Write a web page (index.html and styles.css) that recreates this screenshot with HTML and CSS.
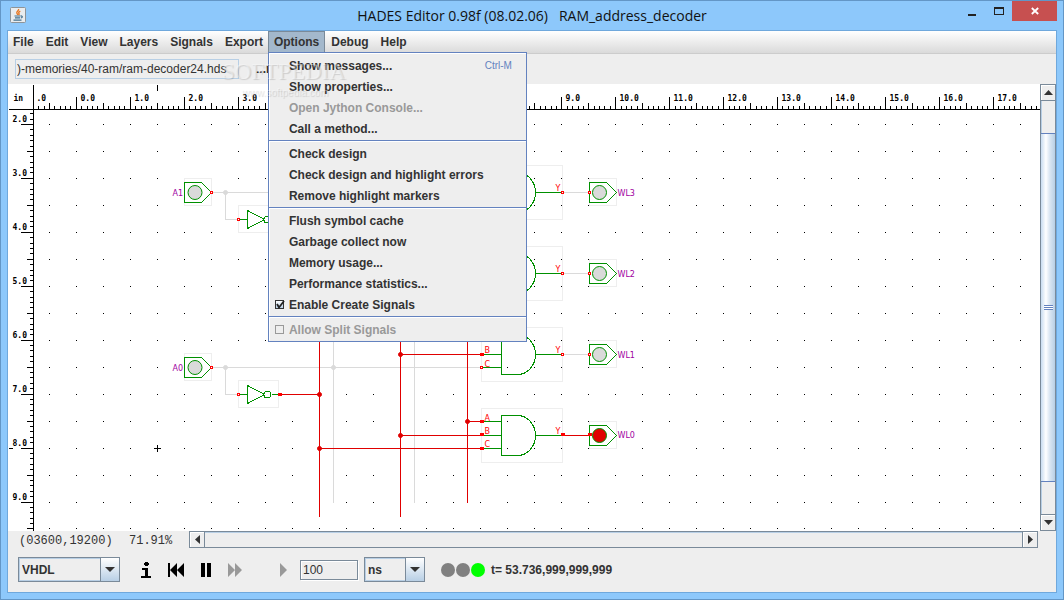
FILE: index.html
```html
<!DOCTYPE html>
<html lang="en">
<head>
<meta charset="utf-8">
<title>HADES Editor</title>
<link rel="stylesheet" href="styles.css">
</head>
<body>
<div class="window">
  <header class="titlebar">
    <svg class="app-icon" width="16" height="16" viewBox="0 0 16 16" aria-hidden="true">
      <rect x=".5" y=".5" width="15" height="15" rx="1" fill="#e9ecee" stroke="#8d9499"/>
      <path d="M8.500 2c1 1.600-2.600 2.400-1.600 4.200.3.700 1 1.200.8 1.900M10.300 4.200c-1.600.7-2 1.400-1.300 2.300.4.600.1 1-.3 1.400" fill="none" stroke="#e87722" stroke-width="1.400"/>
      <path d="M4.500 9h6M5 10.800h5M3.500 13.200h8M10.800 9c2-.3 2 1.800 0 2" fill="none" stroke="#41708f" stroke-width="1.200"/>
    </svg>
    <h1 class="title">HADES Editor 0.98f (08.02.06)&nbsp;&nbsp; RAM_address_decoder</h1>
    <div class="window-buttons">
      <button class="win-btn" aria-label="Minimize"><svg width="8" height="10"><path d="M0 8h8v2H0z" fill="#222"/></svg></button>
      <button class="win-btn" aria-label="Maximize"><svg width="10" height="10" shape-rendering="crispEdges"><path d="M0 1h10v8H0zM1 3v5h8V3z" fill="#222" fill-rule="evenodd"/></svg></button>
      <button class="win-btn close" aria-label="Close"><svg width="8" height="8"><path d="M.8 1l6.400 6M7.200 1L.8 7" stroke="#fff" stroke-width="1.800"/></svg></button>
    </div>
  </header>

  <main class="client">
    <nav class="menubar">
      <button class="menu">File</button>
      <button class="menu">Edit</button>
      <button class="menu">View</button>
      <button class="menu">Layers</button>
      <button class="menu">Signals</button>
      <button class="menu">Export</button>
      <div class="menu-holder">
        <button class="menu open" aria-expanded="true">Options</button>
        <div class="popup">
          <button class="item">Show messages...<span class="key">Ctrl-M</span></button>
          <button class="item">Show properties...</button>
          <button class="item" disabled>Open Jython Console...</button>
          <button class="item">Call a method...</button>
          <hr class="separator">
          <button class="item">Check design</button>
          <button class="item">Check design and highlight errors</button>
          <button class="item">Remove highlight markers</button>
          <hr class="separator">
          <button class="item">Flush symbol cache</button>
          <button class="item">Garbage collect now</button>
          <button class="item">Memory usage...</button>
          <button class="item">Performance statistics...</button>
          <label class="item check"><span class="tick"><input class="box" type="checkbox" checked><svg class="mark" width="10" height="10"><path d="M2 4l2 3.500L9 1" fill="none" stroke="#222" stroke-width="1.800"/></svg></span>Enable Create Signals</label>
          <hr class="separator">
          <label class="item check off"><span class="tick"><input class="box" type="checkbox" disabled></span>Allow Split Signals</label>
        </div>
      </div>
      <button class="menu">Debug</button>
      <button class="menu">Help</button>
    </nav>

    <div class="toolbar">
      <input class="path" type="text" aria-label="Design file" value=")-memories/40-ram/ram-decoder24.hds">
      <span class="message">...m</span>
      <div class="watermark" aria-hidden="true"><span class="brand">SOFTPEDIA</span><span class="site">www.softpedia.com</span></div>
    </div>

    <div class="workspace">
      <div class="canvas">
        <svg class="schematic" id="schematic" role="img" aria-label="Schematic">
          <defs>
            <g id="port"><rect class="bounds" x="0" y="-14" width="27" height="27"/><path class="part" d="M0-10H17L27 0 17 10H0z"/></g>
            <g id="inverter"><rect class="bounds" x="0" y="-14" width="40" height="27"/><path class="part" d="M0 0H9M9-9V9L26 0zM33 0H40"/><circle class="bubble" cx="29" cy="0" r="3.500"/></g>
            <g id="gate"><rect class="bounds" x="0" y="-27" width="81" height="54"/><path class="part" d="M20-20H36A18 20 0 0 1 36 20H20zM54 0H80M0-14H20M0 0H20M0 13H20"/></g>
            <rect id="pin" x="-1" y="-1" width="2" height="2" class="pin"/>
            <rect id="pin-on" x="-1" y="-1" width="3" height="2" class="pin on"/>
          </defs>
          <g transform="translate(-7.500 -83.500)">
            <g id="grid"></g>
            <path class="wire idle" d="M212 192H481M225 192V219H238M212 367H481M225 367V394H238M333 192V502M414 192V502M562 192H588M562 273H588M562 354H588"/>
            <path class="wire" d="M279 394H319M319 341V516M400 341V516M467 341V502M466 341H469M400 354H481M467 421H481M400 435H481M319 448H481M562 435H588"/>
            <use href="#port" x="184" y="192"/><use href="#port" x="184" y="367"/>
            <use href="#inverter" x="238" y="219"/><use href="#inverter" x="238" y="394"/>
            <use href="#gate" x="481" y="192"/><use href="#gate" x="481" y="273"/><use href="#gate" x="481" y="354"/><use href="#gate" x="481" y="435"/>
            <use href="#port" x="589" y="192"/><use href="#port" x="589" y="273"/><use href="#port" x="589" y="354"/><use href="#port" x="589" y="435"/>
            <circle class="lamp" cx="194.500" cy="192" r="7"/><circle class="lamp" cx="194.500" cy="367" r="7"/>
            <circle class="lamp" cx="599" cy="192" r="7"/><circle class="lamp" cx="599" cy="273" r="7"/><circle class="lamp" cx="599" cy="354" r="7"/><circle class="lamp lit" cx="599" cy="435" r="7"/>
            <circle class="joint idle" cx="225" cy="192" r="2"/><circle class="joint idle" cx="225" cy="367" r="2"/><circle class="joint idle" cx="333" cy="367" r="2"/>
            <circle class="joint" cx="319" cy="394" r="2"/><circle class="joint" cx="319" cy="448" r="2"/><circle class="joint" cx="400" cy="354" r="2"/><circle class="joint" cx="400" cy="435" r="2"/><circle class="joint" cx="467" cy="421" r="2"/>
            <use href="#pin" x="211" y="192"/><use href="#pin" x="211" y="367"/><use href="#pin" x="238" y="219"/><use href="#pin" x="238" y="394"/>
            <use href="#pin-on" x="279" y="394"/>
            <use href="#pin" x="562" y="192"/><use href="#pin" x="589" y="192"/><use href="#pin" x="562" y="273"/><use href="#pin" x="589" y="273"/><use href="#pin" x="562" y="354"/><use href="#pin" x="589" y="354"/>
            <use href="#pin-on" x="562" y="434"/><use href="#pin-on" x="589" y="434"/>
            <use href="#pin-on" x="481" y="354"/><use href="#pin" x="481" y="367"/>
            <use href="#pin-on" x="481" y="421"/><use href="#pin-on" x="481" y="434"/><use href="#pin-on" x="481" y="448"/>
            <g class="pin-name">
              <text x="555" y="190">Y</text><text x="555" y="271">Y</text><text x="555" y="352">Y</text><text x="555" y="433">Y</text>
              <text x="484" y="352">B</text><text x="484" y="366">C</text>
              <text x="484" y="420">A</text><text x="484" y="433">B</text><text x="484" y="446">C</text>
            </g>
            <g class="port-name">
              <text x="172" y="195">A1</text><text x="172" y="370">A0</text>
              <text x="617" y="195">WL3</text><text x="617" y="276">WL2</text><text x="617" y="357">WL1</text><text x="617" y="437">WL0</text>
            </g>
            <path class="ink" d="M153.500 448H160.500M157 444.500V451.500"/>
          </g>
        </svg>
      </div>
      <div class="scroll vertical">
        <button class="arrow" aria-label="Scroll up"><svg width="9" height="5"><path d="M0 5L4.500 0 9 5z" fill="#333"/></svg></button>
        <div class="track"><div class="thumb"><span class="grip"></span></div></div>
        <button class="arrow" aria-label="Scroll down"><svg width="9" height="5"><path d="M0 0L4.500 5 9 0z" fill="#333"/></svg></button>
      </div>
    </div>

    <div class="status">
      <span class="position">(03600,19200)</span>
      <span class="zoom">71.91%</span>
      <div class="scroll horizontal">
        <button class="arrow" aria-label="Scroll left"><svg width="5" height="9"><path d="M5 0L0 4.500 5 9z" fill="#333"/></svg></button>
        <div class="track"></div>
        <button class="arrow" aria-label="Scroll right"><svg width="5" height="9"><path d="M0 0L5 4.500 0 9z" fill="#333"/></svg></button>
      </div>
    </div>

    <div class="controls">
      <span class="combo language"><select class="choice" aria-label="Language"><option>VHDL</option></select><span class="drop"><svg width="10" height="5"><path d="M0 0H10L5 5z" fill="#333"/></svg></span></span>
      <div class="transport">
        <button class="tool" aria-label="Info"><svg width="10" height="16" shape-rendering="crispEdges"><path d="M4 0h3v1h1v2H7v1H4V3H3V1h1zM1 6h6v8h3v2H0v-2h4V8H1z"/></svg></button>
        <button class="tool" aria-label="Restart"><svg width="16" height="14"><path d="M0 0h2v14H0zM9 0v14L2 7zM16 0v14L9 7z"/></svg></button>
        <button class="tool" aria-label="Pause"><svg width="10" height="14"><path d="M0 0h4v14H0zM6 0h4v14H6z"/></svg></button>
        <button class="tool" aria-label="Fast forward" disabled><svg width="14" height="14"><path d="M0 0l7 7-7 7zM7 0l7 7-7 7z"/></svg></button>
        <button class="tool step" aria-label="Step" disabled><svg width="7" height="14"><path d="M0 0l7 7-7 7z"/></svg></button>
      </div>
      <input class="amount" type="text" aria-label="Step time" value="100">
      <span class="combo unit"><select class="choice" aria-label="Time unit"><option>ns</option></select><span class="drop"><svg width="10" height="5"><path d="M0 0H10L5 5z" fill="#333"/></svg></span></span>
      <span class="lights"><i class="light"></i><i class="light"></i><i class="light go"></i></span>
      <output class="time">t= 53.736,999,999,999</output>
    </div>
  </main>
</div>
<script src="grid.js"></script>
</body>
</html>
```

FILE: grid.js
```js
// Draws the two rulers and the snap dots over whatever area the canvas has.
(function () {
  var svg = document.getElementById('schematic');
  var grid = document.getElementById('grid');
  var left = 8, top = 84, axisX = 33, axisY = 109;
  var dot = 26.97, tick = dot / 5, dotX = 49.4, dotY = 124.43;

  function label(x, y, text) {
    return '<text class="scale" x="' + x + '" y="' + y + '">' + text + '</text>';
  }
  function draw() {
    var right = left + svg.clientWidth, bottom = top + svg.clientHeight;
    var path = 'M' + left + ' ' + axisY + 'H' + right + 'M' + axisX + ' ' + top + 'V' + bottom;
    var dots = '', out = '', k, i, x, y, size;
    path += 'M157 84V90M8 448H12';
    for (k = -2; (x = Math.floor(dotX + tick * k)) < right; k++) {
      size = k % 10 === 5 ? 13 : k % 5 === 0 ? 7 : 4;
      path += 'M' + x + ' ' + (axisY - size) + 'V' + axisY;
      if (size === 13) out += label(x + 4, 100, ((k - 5) / 10) + '.0');
    }
    for (k = -2; (y = Math.floor(dotY + tick * k)) < bottom; k++) {
      size = k % 10 === 0 ? 13 : k % 5 === 0 ? 7 : 4;
      path += 'M' + (axisX - size) + ' ' + y + 'H' + axisX;
      if (size === 13) out += label(12, y - 3, (k / 10 + 2) + '.0');
    }
    for (i = 0; (x = Math.floor(dotX + dot * i)) < right; i++) {
      for (k = 0; (y = Math.floor(dotY + dot * k)) < bottom; k++) {
        dots += 'M' + (x - 0.5) + ' ' + y + 'h1';
      }
    }
    grid.innerHTML = '<path class="ink" d="' + path + '"/><path class="ink" d="' + dots + '"/>' +
      label(13, 100, 'in') + label(36, 100, '.0') + out;
  }
  draw();
  window.addEventListener('resize', draw);
})();
```

FILE: styles.css
```css
* { box-sizing: border-box; }
body {
  margin: 0;
  font: bold 12px/14px "Liberation Sans", Arial, sans-serif;
  color: #333;
}
button, input, select { font: inherit; color: inherit; margin: 0; padding: 0; border: 0; border-radius: 0; }
button { background: none; }
svg { display: block; }

.window {
  display: flex;
  flex-direction: column;
  height: 100vh;
  padding: 0 6px 6px;
  background: #8dc8fb;
  border: 1px solid #6396c6;
}
.titlebar { display: grid; grid-template-columns: 1fr auto 1fr; align-items: start; height: 29px; }
.app-icon { margin: 6px 0 0 3px; }
.title { margin: 0; padding-top: 5px; font: 14px/20px "Open Sans", "Noto Sans", sans-serif; color: #111; white-space: pre; }
.window-buttons { display: flex; justify-content: flex-end; }
.win-btn { display: grid; place-items: center; width: 27px; height: 20px; }
.win-btn.close { width: 45px; background: #c75050; }

.client { flex: 1; min-height: 0; display: flex; flex-direction: column; background: #eee; border: 1px solid #6fa8dc; }

.menubar { display: flex; gap: 1px; height: 23px; background: linear-gradient(#fff, #dadada); border-bottom: 1px solid #ccc; }
.menu { height: 22px; padding: 0 5px 2px; border: 1px solid transparent; border-width: 1px 1px 0 0; }
.menu.open { background: #a3b8cc; border-color: #7a8a99; border-left-width: 1px; }
.menu-holder { position: relative; margin-left: -2px; }
.popup {
  position: absolute;
  z-index: 2;
  top: 21px;
  left: 0;
  width: 259px;
  padding: 2px 0 1px;
  background: #eee;
  border: 1px solid #6382bf;
  box-shadow: inset 1px 1px #fff;
}
.item { display: flex; align-items: center; width: 100%; height: 21px; padding: 0 14px 0 20px; text-align: left; white-space: nowrap; }
.item:disabled, .item.off { color: #999; }
.item.check { padding-left: 6px; }
.key { margin-left: auto; font-weight: normal; font-size: 10px; color: #6382bf; }
.separator { width: 100%; height: 4px; margin: 0; border: 0; background: linear-gradient(transparent 1px, #6382bf 1px 2px, #fff 2px 3px, transparent 3px); }
.tick { display: grid; width: 14px; }
.box { appearance: none; grid-area: 1 / 1; width: 9px; height: 9px; border: 1px solid #7a8a99; background: #eee; }
.box:checked { border-color: #333; background: linear-gradient(#fff, #b8cfe5); }
.box:disabled { border-color: #999; }
.mark { grid-area: 1 / 1; pointer-events: none; }

.toolbar { position: relative; display: flex; align-items: center; gap: 17px; height: 30px; padding: 0 7px; }
.path { width: 224px; height: 20px; padding: 0 1px; border: 1px solid #b8cfe5; background: #eee; font-weight: normal; font-size: 12px; }
.message { overflow: hidden; }
.watermark { position: absolute; z-index: 3; left: 214px; top: 4px; display: flex; flex-direction: column; pointer-events: none; text-shadow: 1px 1px 1px rgba(0, 0, 0, .14); color: rgba(255, 255, 255, .4); }
.brand { font: 23px/28px "Liberation Serif", serif; }
.site { padding-left: 20px; font: 10px/14px "Liberation Sans", sans-serif; }

.workspace { flex: 1; min-height: 0; display: flex; }
.canvas { flex: 1; min-width: 0; overflow: hidden; background: #fff; }
.schematic { width: 100%; height: 100%; shape-rendering: crispEdges; }
.ink { fill: none; stroke: #000; }
.scale { font: bold 8px "DejaVu Sans Mono", monospace; fill: #000; }
.bounds { fill: none; stroke: #eee; }
.part { fill: none; stroke: #009000; }
.bubble { fill: #fff; stroke: #009000; }
.wire { fill: none; stroke: #e00000; }
.wire.idle { stroke: #dadada; }
.joint { fill: #e00000; stroke: #e00000; shape-rendering: auto; }
.joint.idle { fill: #dadada; stroke: #dadada; }
.lamp { fill: #dadada; stroke: #009000; shape-rendering: auto; }
.lamp.lit { fill: #e00000; }
.pin { fill: #fff; stroke: #f00; }
.pin.on { fill: #f00; }
.pin-name { font: 8px "DejaVu Sans", sans-serif; fill: #f00; }
.port-name { font: 8px "DejaVu Sans", sans-serif; fill: #a000a0; }

.scroll { display: flex; border: 1px solid #7a8a99; background: #eee; }
.scroll.vertical { flex-direction: column; width: 16px; box-shadow: inset 1px 1px #b8cfe5; }
.scroll.horizontal { flex: 1; height: 17px; box-shadow: inset 0 1px #b8cfe5; }
.arrow { display: grid; place-items: center; flex: none; width: 14px; height: 15px; box-shadow: inset 1px 1px #fff; }
.track { flex: 1; display: flex; }
.vertical .track { flex-direction: column; padding: 32px 0; border: solid #7a8a99; border-width: 1px 0; }
.horizontal .track { border: solid #7a8a99; border-width: 0 1px; }
.thumb { flex: 1; display: grid; place-items: center; border: solid #6382bf; border-width: 1px 0; background: linear-gradient(90deg, #c8dcf0, #fff 35%, #dde8f3 60%, #b8cfe5); }
.grip { width: 9px; height: 5px; background: repeating-linear-gradient(#6382bf 0 1px, #fff 1px 2px); }

.status { display: flex; align-items: flex-start; padding-right: 18px; font: 12px/14px "Liberation Mono", monospace; }
.position { padding: 3px 0 0 11px; width: 121px; }
.zoom { padding-top: 3px; width: 60px; }

.controls { display: flex; align-items: center; height: 44px; padding: 0 10px 1px; }
.combo { display: grid; grid-template-columns: 1fr 19px; height: 25px; border: 1px solid #7a8a99; }
.language { width: 102px; }
.unit { width: 61px; margin-left: 6px; }
.choice { appearance: none; grid-area: 1 / 1 / 2 / 3; padding: 0 22px 0 2px; background: #eee; border: 1px solid #b8cfe5; }
.drop { grid-area: 1 / 2; display: grid; place-items: center; border-left: 1px solid #7a8a99; background: linear-gradient(#fff, #b8cfe5); pointer-events: none; }
.transport { display: flex; align-items: center; gap: 17px; padding: 0 13px 0 21px; }
.tool { fill: #000; }
.tool:disabled { fill: #999; }
.tool.step { margin-left: 21px; }
.amount { width: 58px; height: 20px; padding: 0 2px; background: #eee; border: 1px solid #7a8a99; box-shadow: inset 1px 1px #fff, 1px 1px #fff; font-weight: normal; }
.lights { display: flex; gap: 1px; margin-left: 16px; }
.light { width: 14px; height: 14px; border-radius: 50%; background: #808080; }
.light.go { background: #0f0; }
.time { margin-left: 6px; }
```
